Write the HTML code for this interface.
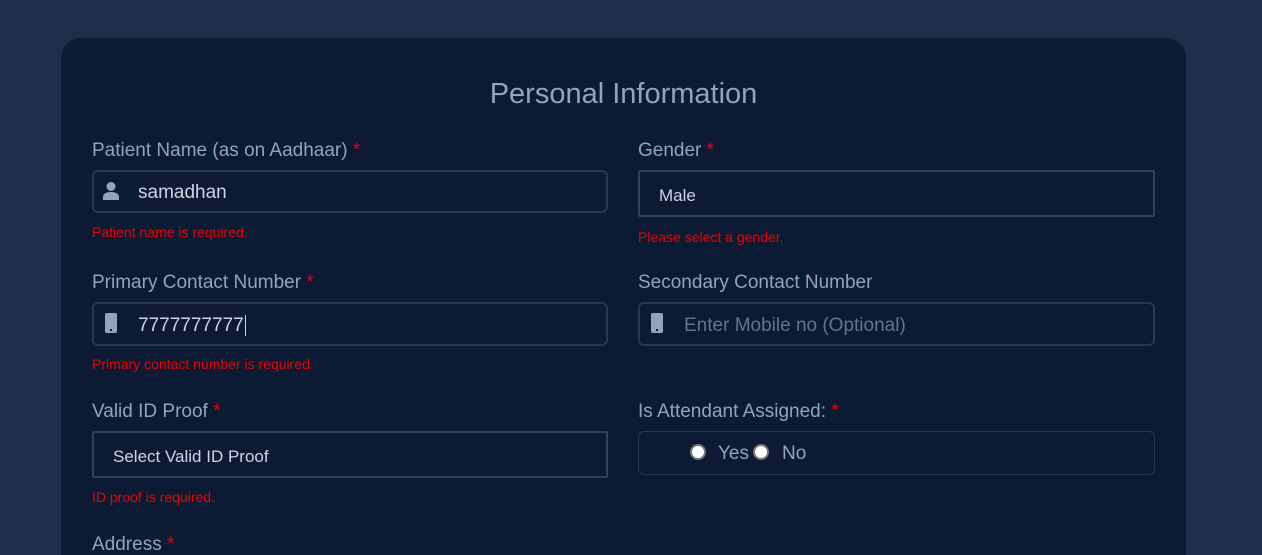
<!DOCTYPE html><html style="height:555px;overflow:hidden"><head><style>
*{box-sizing:border-box;margin:0;padding:0}
body{width:1262px;height:555px;overflow:hidden;background:#1f2d4a;font-family:"Liberation Sans",sans-serif;color:#94a3b8;position:relative}
.card{position:absolute;left:61px;top:38px;width:1125px;height:517px;background:#0d1a33;border-radius:20px 20px 0 0}
.a{position:absolute}
h1{position:absolute;left:0;width:1125px;top:78px;text-align:center;font-weight:normal;font-size:29px;color:#94a3b8}
.lbl{font-size:19px;color:#94a3b8}
.lbl b{color:#e00;font-weight:normal}
.in{border:2px solid #2a3751;border-radius:6px;background:#0d1a33}
.sel{border:2px solid #334155;border-radius:2px}
.err{font-size:14px;color:#e00}
.t{font-size:19px;color:#cbd5e1}
.ph{font-size:19px;color:#64748b}
.radio{width:16px;height:16px;border-radius:50%;background:#fff;border:2px solid #777;display:inline-block}
</style></head><body>
<div class="card"></div>
<div class="a" style="left:61px;top:0;width:1125px"><h1>Personal Information</h1></div>

<div class="a lbl" style="left:92px;top:140px">Patient Name (as on Aadhaar) <b>*</b></div>
<div class="a in" style="left:92px;top:170px;width:516px;height:43px"></div>
<svg class="a" style="left:101px;top:181px" width="20" height="20" viewBox="0 0 20 20"><circle cx="10" cy="5.5" r="4.5" fill="#94a3b8"/><path d="M2 19v-3c0-3 3-5 8-5s8 2 8 5v3z" fill="#94a3b8"/></svg>
<div class="a t" style="left:138px;top:182px">samadhan</div>
<div class="a err" style="left:92px;top:224px">Patient name is required.</div>

<div class="a lbl" style="left:638px;top:140px">Gender <b>*</b></div>
<div class="a sel" style="left:638px;top:170px;width:517px;height:47px"></div>
<div class="a" style="left:659px;top:186px;font-size:17px;color:#cbd5e1">Male</div>
<div class="a err" style="left:638px;top:229px">Please select a gender.</div>

<div class="a lbl" style="left:92px;top:272px">Primary Contact Number <b>*</b></div>
<div class="a in" style="left:92px;top:302px;width:516px;height:44px"></div>
<div class="a" style="left:105px;top:313px;width:12px;height:20px;background:#94a3b8;border-radius:2px"></div>
<div class="a" style="left:110px;top:329px;width:2px;height:2px;background:#0d1a33"></div>
<div class="a t" style="left:138px;top:315px">7777777777<span style="border-left:1px solid #cbd5e1;margin-left:1px"></span></div>
<div class="a err" style="left:92px;top:356px">Primary contact number is required.</div>

<div class="a lbl" style="left:638px;top:272px">Secondary Contact Number</div>
<div class="a in" style="left:638px;top:302px;width:517px;height:44px"></div>
<div class="a" style="left:651px;top:313px;width:12px;height:20px;background:#94a3b8;border-radius:2px"></div>
<div class="a" style="left:656px;top:329px;width:2px;height:2px;background:#0d1a33"></div>
<div class="a ph" style="left:684px;top:315px">Enter Mobile no (Optional)</div>

<div class="a lbl" style="left:92px;top:401px">Valid ID Proof <b>*</b></div>
<div class="a sel" style="left:92px;top:431px;width:516px;height:47px"></div>
<div class="a" style="left:113px;top:447px;font-size:17px;color:#cbd5e1">Select Valid ID Proof</div>
<div class="a err" style="left:92px;top:489px">ID proof is required.</div>

<div class="a lbl" style="left:638px;top:401px">Is Attendant Assigned: <b>*</b></div>
<div class="a in" style="left:638px;top:431px;width:517px;height:44px;border-width:1px"></div>
<div class="a radio" style="left:690px;top:444px"></div>
<div class="a t" style="left:718px;top:443px;color:#94a3b8">Yes</div>
<div class="a radio" style="left:753px;top:444px"></div>
<div class="a t" style="left:782px;top:443px;color:#94a3b8">No</div>

<div class="a lbl" style="left:92px;top:534px">Address <b>*</b></div>
</body></html>
